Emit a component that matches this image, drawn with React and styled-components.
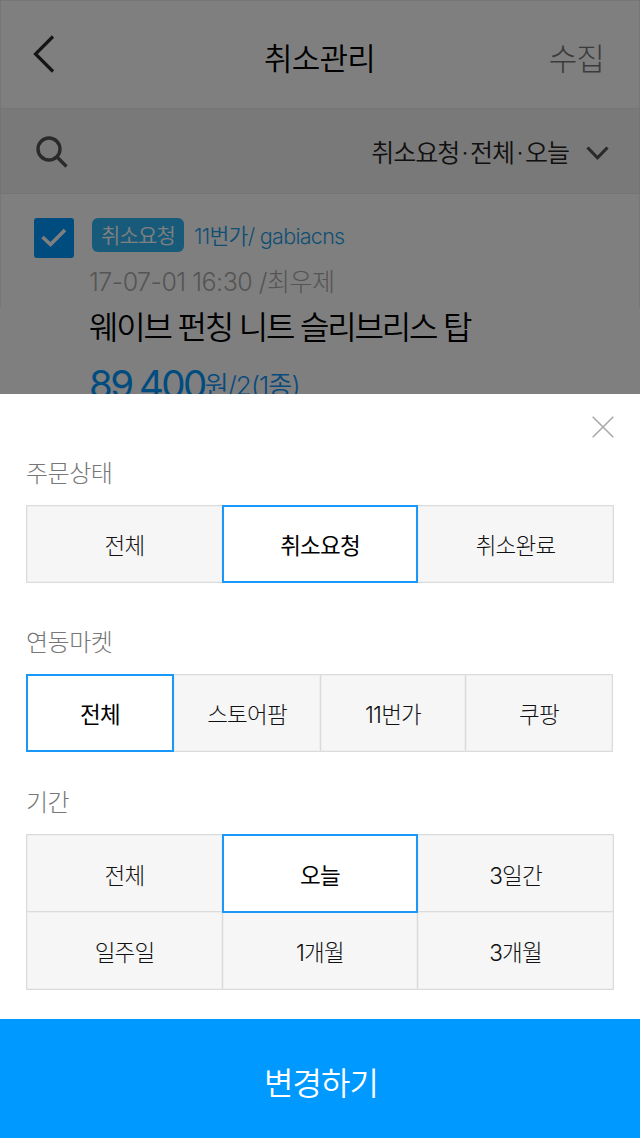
import React from "react";
import styled, { createGlobalStyle } from "styled-components";

const Global = createGlobalStyle`
  * { box-sizing: border-box; }
  body { margin: 0; background: #fff; }
  button { font: inherit; border: 0; padding: 0; background: none; }
`;

const Screen = styled.main`
  position: relative;
  width: 640px;
  height: 1138px;
  overflow: hidden;
  background: #fff;
  font-family: Inter, "Noto Sans CJK KR", sans-serif;
  font-weight: 350;
`;

const Text = styled.span`
  margin-top: ${(p) => p.$drop || 0}px;
  font-size: ${(p) => p.$size}px;
  letter-spacing: ${(p) => p.$track || 0}px;
  word-spacing: ${(p) => p.$word || 0}px;
  line-height: 1.2;
  color: ${(p) => p.$color || "#000"};
  font-weight: ${(p) => p.$weight || 350};
  white-space: nowrap;
`;

const Header = styled.header`
  display: grid;
  grid-template-columns: 1fr auto 1fr;
  align-items: center;
  height: 109px;
  padding: 8px 35px 0 34px;
  border: 1px solid #ececec;
`;

const BackIcon = styled.svg`
  margin: 0 0 9px -2px;
`;

const HeaderAction = styled.button`
  justify-self: end;
`;

const FilterBar = styled.div`
  display: flex;
  align-items: center;
  height: 85px;
  padding: 2px 30px 0 35px;
  background: #f3f3f3;
  border: 1px solid #e9e9e9;
  border-top: 0;
`;

const FilterToggle = styled.button`
  display: flex;
  align-items: center;
  gap: 17px;
  margin-left: auto;
  padding-top: 2px;
`;

const Order = styled.article`
  display: flex;
  gap: 15px;
  height: 113px;
  padding: 24px 33px;
  border: solid #ececec;
  border-width: 0 1px;
`;

const CheckBox = styled.span`
  flex: none;
  display: grid;
  place-items: center;
  width: 40px;
  height: 40px;
  border-radius: 3px;
  background: #0099ff;
`;

const OrderBody = styled.div`
  display: flex;
  flex-direction: column;
  align-items: flex-start;
`;

const OrderLine = styled.div`
  flex: none;
  display: flex;
  align-items: flex-start;
  height: ${(p) => p.$height}px;
`;

const Badge = styled.span`
  display: flex;
  align-items: center;
  justify-content: center;
  width: 92px;
  height: 34px;
  margin: 0 10px 0 3px;
  border-radius: 6px;
  background: #30b5f5;
`;

const Dim = styled.div`
  position: absolute;
  inset: 0;
  background: rgba(0, 0, 0, 0.5);
`;

const Sheet = styled.section`
  position: absolute;
  left: 0;
  right: 0;
  bottom: 0;
  display: flex;
  flex-direction: column;
  height: 744px;
  background: #fff;
`;

const SheetTop = styled.div`
  display: flex;
  justify-content: flex-end;
  height: 63px;
  padding: 22px 26px 0 0;
`;

const Group = styled.div`
  display: flex;
  flex-direction: column;
  height: ${(p) => p.$height}px;
  padding: 0 26px;
`;

const GroupLabel = styled.div`
  height: 48px;
  font-size: 24px;
  font-weight: 300;
  letter-spacing: -0.5px;
  line-height: 34px;
  color: #777;
`;

const Options = styled.div`
  display: grid;
  grid-template-columns: ${(p) => p.$columns};
  grid-auto-rows: 77px;
`;

const Option = styled.button`
  position: relative;
  z-index: ${(p) => (p.$active ? 1 : 0)};
  margin-right: -1px;
  margin-bottom: ${(p) => (p.$tall ? -2 : -1)}px;
  border: ${(p) => (p.$active ? "2px solid #1898fb" : "1px solid #dbdbdb")};
  box-shadow: ${(p) => (p.$active ? "none" : "inset 0 0 0 1px #eee")};
  background: ${(p) => (p.$active ? "#fff" : "#f6f6f6")};
  color: ${(p) => (p.$active ? "#000" : "#111")};
  font-size: 22.5px;
  font-weight: ${(p) => (p.$active ? 400 : 300)};
  letter-spacing: -0.8px;
  text-align: center;
`;

const Submit = styled.button`
  height: 119px;
  margin-top: auto;
  padding: 12px 0 0 2px;
  background: #0099ff;
`;

const groups = [
  { label: "주문상태", height: 169, columns: "196px 195px 196px", options: ["전체", "취소요청", "취소완료"], active: 1 },
  { label: "연동마켓", height: 160, columns: "147px 147px 145px 147px", options: ["전체", "스토어팜", "11번가", "쿠팡"], active: 0 },
  { label: "기간", height: 211, columns: "196px 195px 196px", options: ["전체", "오늘", "3일간", "일주일", "1개월", "3개월"], active: 1 },
];

export default function App() {
  return (
    <Screen>
      <Global />
      <Header>
        <BackIcon width="22" height="38" viewBox="0 0 22 38" fill="none" stroke="#2a2a2a" strokeWidth="3.2">
          <path d="M20 1.5 2.5 19 20 36.5" />
        </BackIcon>
        <Text $size={31} $track={-0.8}>취소관리</Text>
        <HeaderAction>
          <Text $size={31} $track={-0.9} $weight={300} $color="#777">수집</Text>
        </HeaderAction>
      </Header>
      <FilterBar>
        <svg width="32" height="32" viewBox="0 0 32 32" fill="none" stroke="#555" strokeWidth="3.4">
          <circle cx="13" cy="13" r="11" />
          <path d="M20.5 20.5 30.5 30.5" />
        </svg>
        <FilterToggle>
          <Text $size={25} $track={-1} $word={-3.6} $color="#222">취소요청 · 전체 · 오늘</Text>
          <svg width="23" height="15" viewBox="0 0 23 15" fill="none" stroke="#555" strokeWidth="3.2">
            <path d="M1.5 1.5 11.5 11.8 21.5 1.5" />
          </svg>
        </FilterToggle>
      </FilterBar>
      <Order>
        <CheckBox>
          <svg width="26" height="20" viewBox="0 0 26 20" fill="none" stroke="#fff" strokeWidth="3.6">
            <path d="M1.5 9 9.5 16.5 24 2" />
          </svg>
        </CheckBox>
        <OrderBody>
          <OrderLine $height={48}>
            <Badge><Text $drop={2} $size={21} $track={-0.8} $color="#fff">취소요청</Text></Badge>
            <Text $drop={6} $size={21.5} $track={-0.7} $color="#1e9fe8">11번가/ gabiacns</Text>
          </OrderLine>
          <OrderLine $height={43}>
            <Text $drop={1} $size={25} $track={-0.5} $weight={300} $color="#aaa">17-07-01 16:30 /최우제</Text>
          </OrderLine>
          <OrderLine $height={53}>
            <Text $size={32} $track={-2.2}>웨이브 펀칭 니트 슬리브리스 탑</Text>
          </OrderLine>
          <OrderLine $height={50}>
            <Text $drop={-1} $size={38.5} $track={-2.6} $weight={400} $color="#0099ff">89,400</Text>
            <Text $drop={8} $size={26} $track={-0.9} $color="#1296f8">원/2(1종)</Text>
          </OrderLine>
        </OrderBody>
      </Order>
      <Dim />
      <Sheet>
        <SheetTop>
          <svg width="22" height="22" viewBox="0 0 22 22" fill="none" stroke="#aaa" strokeWidth="1.6">
            <path d="M.7.7 21.3 21.3M21.3.7.7 21.3" />
          </svg>
        </SheetTop>
        {groups.map((g) => (
          <Group key={g.label} $height={g.height}>
            <GroupLabel>{g.label}</GroupLabel>
            <Options $columns={g.columns}>
              {g.options.map((name, i) => (
                <Option key={name} $active={i === g.active} $tall={g.options.length > 4}>{name}</Option>
              ))}
            </Options>
          </Group>
        ))}
        <Submit><Text $size={32} $track={-0.9} $color="#fff">변경하기</Text></Submit>
      </Sheet>
    </Screen>
  );
}
